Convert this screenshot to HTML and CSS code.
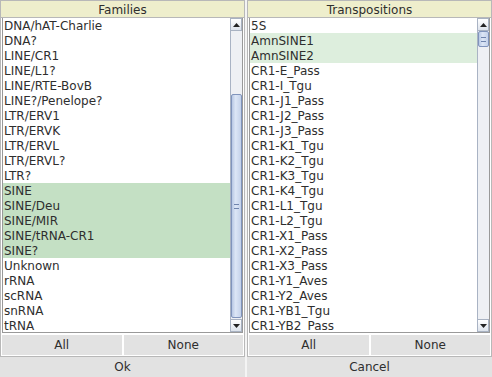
FILE: index.html
```html
<!DOCTYPE html>
<html>
<head>
<meta charset="utf-8">
<link rel="stylesheet" href="styles.css">
</head>
<body>
<div class="window">
  <div class="panels">
    <div class="panel">
      <div class="header">Families</div>
      <div class="listbox">
        <div class="list">
          <div class="row">DNA/hAT-Charlie</div>
          <div class="row">DNA?</div>
          <div class="row">LINE/CR1</div>
          <div class="row">LINE/L1?</div>
          <div class="row">LINE/RTE-BovB</div>
          <div class="row">LINE?/Penelope?</div>
          <div class="row">LTR/ERV1</div>
          <div class="row">LTR/ERVK</div>
          <div class="row">LTR/ERVL</div>
          <div class="row">LTR/ERVL?</div>
          <div class="row">LTR?</div>
          <div class="row sel">SINE</div>
          <div class="row sel">SINE/Deu</div>
          <div class="row sel">SINE/MIR</div>
          <div class="row sel">SINE/tRNA-CR1</div>
          <div class="row sel">SINE?</div>
          <div class="row">Unknown</div>
          <div class="row">rRNA</div>
          <div class="row">scRNA</div>
          <div class="row">snRNA</div>
          <div class="row">tRNA</div>
        </div>
        <div class="scrollbar">
          <div class="arrow up"><svg width="7" height="4" viewBox="0 0 7 4"><path d="M0 4 L3.5 0 L7 4Z" fill="#222"/></svg></div>
          <div class="track">
            <div class="space left-top"></div>
            <div class="thumb thumb-left"><span class="grip"></span></div>
          </div>
          <div class="arrow down"><svg width="7" height="4" viewBox="0 0 7 4"><path d="M0 0 L3.5 4 L7 0Z" fill="#222"/></svg></div>
        </div>
      </div>
      <div class="btns">
        <div class="btn">All</div>
        <div class="btn">None</div>
      </div>
    </div>
    <div class="panel">
      <div class="header">Transpositions</div>
      <div class="listbox">
        <div class="list">
          <div class="row">5S</div>
          <div class="row sel2">AmnSINE1</div>
          <div class="row sel2">AmnSINE2</div>
          <div class="row">CR1-E_Pass</div>
          <div class="row">CR1-I_Tgu</div>
          <div class="row">CR1-J1_Pass</div>
          <div class="row">CR1-J2_Pass</div>
          <div class="row">CR1-J3_Pass</div>
          <div class="row">CR1-K1_Tgu</div>
          <div class="row">CR1-K2_Tgu</div>
          <div class="row">CR1-K3_Tgu</div>
          <div class="row">CR1-K4_Tgu</div>
          <div class="row">CR1-L1_Tgu</div>
          <div class="row">CR1-L2_Tgu</div>
          <div class="row">CR1-X1_Pass</div>
          <div class="row">CR1-X2_Pass</div>
          <div class="row">CR1-X3_Pass</div>
          <div class="row">CR1-Y1_Aves</div>
          <div class="row">CR1-Y2_Aves</div>
          <div class="row">CR1-YB1_Tgu</div>
          <div class="row">CR1-YB2_Pass</div>
        </div>
        <div class="scrollbar">
          <div class="arrow up"><svg width="7" height="4" viewBox="0 0 7 4"><path d="M0 4 L3.5 0 L7 4Z" fill="#222"/></svg></div>
          <div class="track">
            <div class="thumb thumb-right"><span class="grip"></span></div>
          </div>
          <div class="arrow down"><svg width="7" height="4" viewBox="0 0 7 4"><path d="M0 0 L3.5 4 L7 0Z" fill="#222"/></svg></div>
        </div>
      </div>
      <div class="btns">
        <div class="btn">All</div>
        <div class="btn">None</div>
      </div>
    </div>
  </div>
  <div class="bottom">
    <div class="btn big">Ok</div>
    <div class="btn big">Cancel</div>
  </div>
</div>
</body>
</html>
```
FILE: styles.css
```css
* { box-sizing: border-box; }
html, body { margin: 0; padding: 0; }
body {
  background: #f4f4f4;
  font-family: "DejaVu Sans", sans-serif;
  font-size: 12px;
  color: #2e2e2e;
}
.window {
  width: 492px;
  height: 377px;
  display: flex;
  flex-direction: column;
  gap: 2px;
  background: #f4f4f4;
}
.panels {
  display: grid;
  grid-template-columns: 245px 245px;
  column-gap: 2px;
  height: 355px;
}
.panel {
  border: 1px solid #b8b8b8;
  display: flex;
  flex-direction: column;
  background: #ffffff;
  padding: 0 1px 1px 1px;
}
.header {
  height: 17px;
  background: #eeeecc;
  border-bottom: 1px solid #b8b8b8;
  margin: 0 -1px;
  text-align: center;
  line-height: 18px;
}
.listbox {
  display: flex;
  height: 315px;
  border: 1px solid #999999;
  border-top: none;
  overflow: hidden;
}
.list {
  flex: 1;
  overflow: hidden;
  background: #fff;
}
.row {
  height: 15px;
  line-height: 15px;
  padding-top: 1px;
  padding-left: 1px;
  white-space: nowrap;
}
.sel { background: #c4e0c4; }
.sel2 { background: #ddeedd; }
.scrollbar {
  width: 12px;
  display: flex;
  flex-direction: column;
  background: #eef0f4;
  border-left: 1px solid #a9b3c4;
}
.arrow {
  height: 13px;
  display: flex;
  align-items: center;
  justify-content: center;
  background: linear-gradient(#ffffff, #dde3ec);
  border: 1px solid #a8b2c2;
  border-left: none;
}
.track {
  flex: 1;
  display: flex;
  flex-direction: column;
  background: #eef0f4;
}
.left-top { height: 63px; }
.thumb {
  background: linear-gradient(90deg, #b8c8e4, #dce6f6 40%, #c4d2ea);
  border: 1px solid #8094bc;
  border-radius: 2px;
  display: flex;
  align-items: center;
  justify-content: center;
}
.thumb-left { height: 224px; }
.thumb-right { height: 16px; }
.grip {
  width: 5px;
  height: 5px;
  border-top: 1px solid #6f84ad;
  border-bottom: 1px solid #6f84ad;
}
.btns {
  margin-top: 2px;
  display: grid;
  grid-template-columns: 1fr 1fr;
  column-gap: 2px;
  height: 20px;
}
.btn {
  background: #e2e2e2;
  text-align: center;
  line-height: 20px;
  color: #2e2e2e;
}
.bottom {
  display: grid;
  grid-template-columns: 245px 245px;
  column-gap: 2px;
  height: 20px;
}
```
